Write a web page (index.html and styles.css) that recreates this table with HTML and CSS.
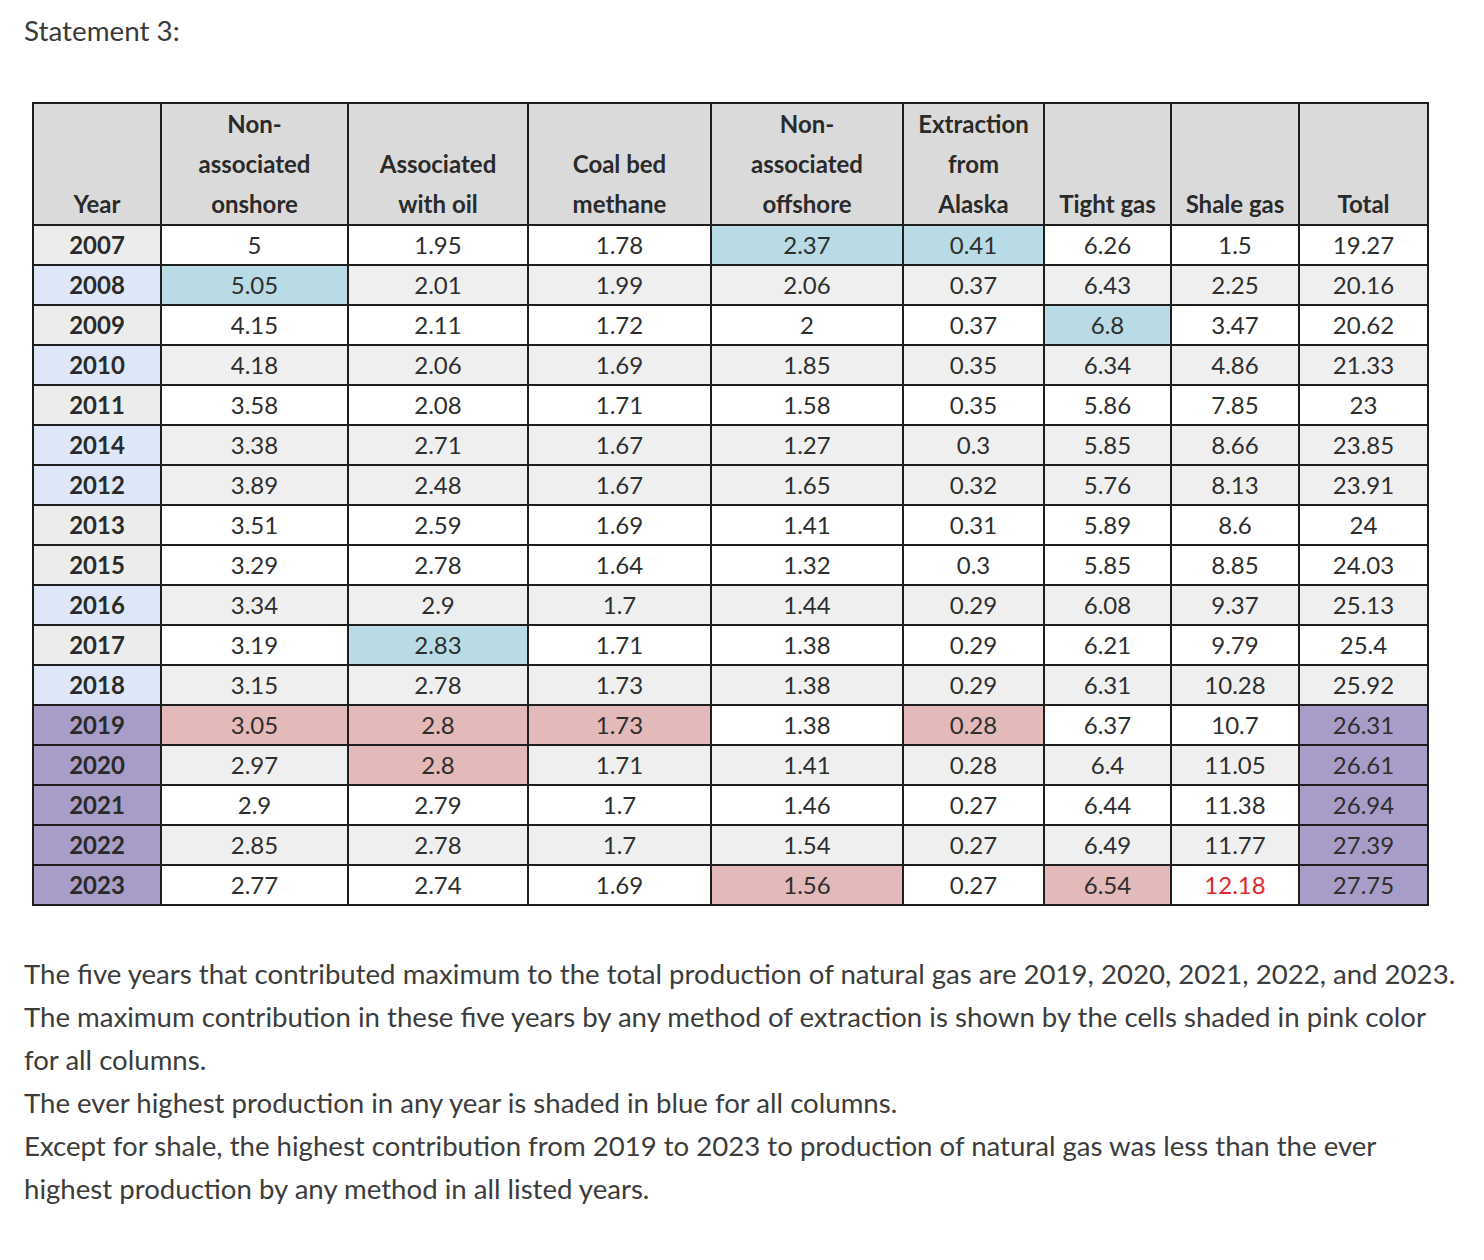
FILE: index.html
```html
<!DOCTYPE html>
<html lang="en">
<head>
<meta charset="utf-8">
<title>Statement 3</title>
<link rel="stylesheet" href="styles.css">
</head>
<body>
<div class="page">
  <div class="title">Statement 3:</div>
  <table class="gas">
    <colgroup>
      <col class="c-year"><col class="c-onshore"><col class="c-oil"><col class="c-coal"><col class="c-offshore"><col class="c-alaska"><col class="c-tight"><col class="c-shale"><col class="c-total">
    </colgroup>
    <thead>
      <tr>
        <th>Year</th>
        <th>Non-<br>associated<br>onshore</th>
        <th>Associated<br>with oil</th>
        <th>Coal bed<br>methane</th>
        <th>Non-<br>associated<br>offshore</th>
        <th>Extraction<br>from<br>Alaska</th>
        <th>Tight gas</th>
        <th>Shale gas</th>
        <th>Total</th>
      </tr>
    </thead>
    <tbody>
      <tr class="w"><td class="y-g">2007</td><td>5</td><td>1.95</td><td>1.78</td><td class="blue">2.37</td><td class="blue">0.41</td><td>6.26</td><td>1.5</td><td>19.27</td></tr>
      <tr class="g"><td class="y-b">2008</td><td class="blue">5.05</td><td>2.01</td><td>1.99</td><td>2.06</td><td>0.37</td><td>6.43</td><td>2.25</td><td>20.16</td></tr>
      <tr class="w"><td class="y-g">2009</td><td>4.15</td><td>2.11</td><td>1.72</td><td>2</td><td>0.37</td><td class="blue">6.8</td><td>3.47</td><td>20.62</td></tr>
      <tr class="g"><td class="y-b">2010</td><td>4.18</td><td>2.06</td><td>1.69</td><td>1.85</td><td>0.35</td><td>6.34</td><td>4.86</td><td>21.33</td></tr>
      <tr class="w"><td class="y-g">2011</td><td>3.58</td><td>2.08</td><td>1.71</td><td>1.58</td><td>0.35</td><td>5.86</td><td>7.85</td><td>23</td></tr>
      <tr class="g"><td class="y-b">2014</td><td>3.38</td><td>2.71</td><td>1.67</td><td>1.27</td><td>0.3</td><td>5.85</td><td>8.66</td><td>23.85</td></tr>
      <tr class="g"><td class="y-b">2012</td><td>3.89</td><td>2.48</td><td>1.67</td><td>1.65</td><td>0.32</td><td>5.76</td><td>8.13</td><td>23.91</td></tr>
      <tr class="w"><td class="y-g">2013</td><td>3.51</td><td>2.59</td><td>1.69</td><td>1.41</td><td>0.31</td><td>5.89</td><td>8.6</td><td>24</td></tr>
      <tr class="w"><td class="y-g">2015</td><td>3.29</td><td>2.78</td><td>1.64</td><td>1.32</td><td>0.3</td><td>5.85</td><td>8.85</td><td>24.03</td></tr>
      <tr class="g"><td class="y-b">2016</td><td>3.34</td><td>2.9</td><td>1.7</td><td>1.44</td><td>0.29</td><td>6.08</td><td>9.37</td><td>25.13</td></tr>
      <tr class="w"><td class="y-g">2017</td><td>3.19</td><td class="blue">2.83</td><td>1.71</td><td>1.38</td><td>0.29</td><td>6.21</td><td>9.79</td><td>25.4</td></tr>
      <tr class="g"><td class="y-b">2018</td><td>3.15</td><td>2.78</td><td>1.73</td><td>1.38</td><td>0.29</td><td>6.31</td><td>10.28</td><td>25.92</td></tr>
      <tr class="w"><td class="y-p">2019</td><td class="pink">3.05</td><td class="pink">2.8</td><td class="pink">1.73</td><td>1.38</td><td class="pink">0.28</td><td>6.37</td><td>10.7</td><td class="purple">26.31</td></tr>
      <tr class="g"><td class="y-p">2020</td><td>2.97</td><td class="pink">2.8</td><td>1.71</td><td>1.41</td><td>0.28</td><td>6.4</td><td>11.05</td><td class="purple">26.61</td></tr>
      <tr class="w"><td class="y-p">2021</td><td>2.9</td><td>2.79</td><td>1.7</td><td>1.46</td><td>0.27</td><td>6.44</td><td>11.38</td><td class="purple">26.94</td></tr>
      <tr class="g"><td class="y-p">2022</td><td>2.85</td><td>2.78</td><td>1.7</td><td>1.54</td><td>0.27</td><td>6.49</td><td>11.77</td><td class="purple">27.39</td></tr>
      <tr class="w"><td class="y-p">2023</td><td>2.77</td><td>2.74</td><td>1.69</td><td class="pink">1.56</td><td>0.27</td><td class="pink">6.54</td><td class="red">12.18</td><td class="purple">27.75</td></tr>
    </tbody>
  </table>
  <div class="notes">
    <p>The five years that contributed maximum to the total production of natural gas are 2019, 2020, 2021, 2022, and 2023.</p>
    <p>The maximum contribution in these five years by any method of extraction is shown by the cells shaded in pink color for all columns.</p>
    <p>The ever highest production in any year is shaded in blue for all columns.</p>
    <p>Except for shale, the highest contribution from 2019 to 2023 to production of natural gas was less than the ever highest production by any method in all listed years.</p>
  </div>
</div>
</body>
</html>
```

FILE: styles.css
```css
html, body {
  margin: 0;
  padding: 0;
  background: #ffffff;
}

.page {
  padding: 13px 0 0 24px;
  font-family: "Lato", "Open Sans", sans-serif;
  color: #3a3a3a;
}

.title {
  font-size: 27.8px;
  line-height: 36px;
}

.gas {
  margin: 53px 0 0 8px;
  border-collapse: collapse;
  table-layout: fixed;
  width: 1395px;
  font-family: "Lato", "Open Sans", sans-serif;
  font-size: 24px;
  color: #2e2e2e;
}

.c-year { width: 128px; }
.c-onshore { width: 187px; }
.c-oil { width: 180px; }
.c-coal { width: 183px; }
.c-offshore { width: 192px; }
.c-alaska { width: 141px; }
.c-tight { width: 127px; }
.c-shale { width: 128px; }
.c-total { width: 129px; }

.gas th,
.gas td {
  border: 2px solid #1e1e1e;
  text-align: center;
  padding: 0;
}

.gas thead tr {
  height: 122px;
}

.gas th {
  background: #dadada;
  font-weight: 700;
  line-height: 40px;
  vertical-align: bottom;
  color: #2a2a2a;
}

.gas tbody tr {
  height: 40px;
}

.gas td {
  line-height: 36px;
}

.gas tr.w td { background: #ffffff; }
.gas tr.g td { background: #efefef; }

.gas tr td.y-g,
.gas tr td.y-b,
.gas tr td.y-p { font-weight: 700; color: #2a2a2a; }

.gas tr td.y-g { background: #ececec; }
.gas tr td.y-b { background: #dde7f8; }
.gas tr td.y-p { background: #a79dc8; }
.gas tr td.blue { background: #b8dbe6; }
.gas tr td.pink { background: #e4b9b9; }
.gas tr td.purple { background: #a79dc8; }
.gas tr td.red { color: #e0282b; }

.notes {
  margin-top: 46px;
  width: 1434px;
  font-size: 27.6px;
  line-height: 43px;
  color: #3c3c3c;
}

.notes p {
  margin: 0;
}
```
